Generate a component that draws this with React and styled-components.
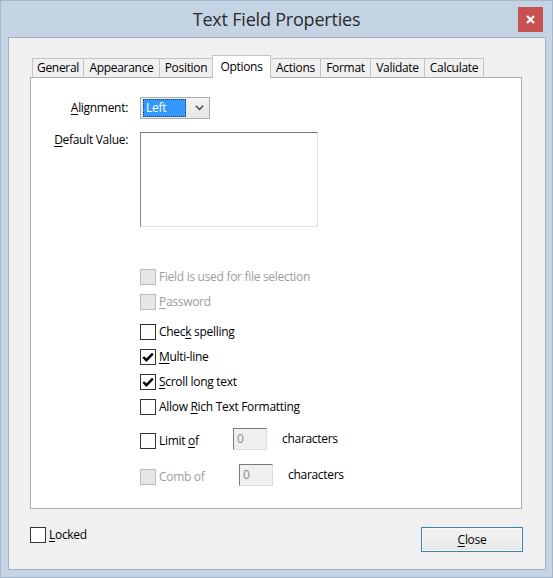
import React from 'react'
import styled, { createGlobalStyle } from 'styled-components'

const GlobalStyle = createGlobalStyle`
html, body {
    margin: 0;
    padding: 0;
}
body {
    background: #c4d4e5;
    font-family: "Open Sans", "Noto Sans", sans-serif;
    font-size: 12px;
    letter-spacing: -0.3px;
    color: #000;
}
`;

const Window = styled.div`
width: 553px;
height: 578px;
box-sizing: border-box;
background: #c4d4e5;
border: 1px solid #a7b8cb;
display: flex;
flex-direction: column;
`;
const TitleBar = styled.div`
height: 36px;
display: grid;
grid-template-columns: 1fr auto 1fr;
align-items: center;
`;
const Title = styled.div`
grid-column: 2;
font-size: 18px;
letter-spacing: -0.2px;
color: #2b2b2b;
line-height: 24px;
`;
const CloseX = styled.div`
grid-column: 3;
justify-self: end;
align-self: start;
margin: 6px 9px 0 0;
width: 25px;
height: 25px;
background: #c75050;
display: flex;
align-items: center;
justify-content: center;
`;
const Client = styled.div`
flex: 1;
margin: 0 6px 7px 7px;
border: 1px solid #a3b0bf;
background: #f0f0f0;
padding: 17px 23px 0 21px;
display: flex;
flex-direction: column;
`;
const TabStrip = styled.div`
display: flex;
align-items: flex-end;
padding-left: 2px;
`;
const Tab = styled.div`
box-sizing: border-box;
width: ${p => p.$w}px;
height: ${p => p.$active ? 23 : 19}px;
margin-left: ${p => p.$first ? 0 : -1}px;
margin-bottom: ${p => p.$active ? -1 : 0}px;
border: 1px solid #c3c3c3;
border-bottom: none;
background: ${p => p.$active ? '#fff' : '#f0f0f0'};
position: relative;
z-index: ${p => p.$active ? 1 : 0};
display: flex;
align-items: center;
justify-content: center;
line-height: 16px;
`;
const Panel = styled.div`
flex: 1;
border: 1px solid #adadad;
background: #fff;
padding-top: 19px;
`;
const FormGrid = styled.div`
display: grid;
grid-template-columns: 97px auto;
column-gap: 12px;
row-gap: 13px;
justify-content: start;
`;
const FieldLabel = styled.div`
text-align: right;
line-height: 16px;
align-self: ${p => p.$top ? 'start' : 'center'};
`;
const Key = styled.span`
text-decoration: underline;
text-underline-offset: 2px;
`;
const Select = styled.div`
box-sizing: border-box;
width: 70px;
height: 22px;
border: 1px solid #acacac;
background: linear-gradient(#f3f3f3, #e6e6e6);
display: flex;
align-items: center;
padding: 0 2px;
`;
const SelectValue = styled.div`
box-sizing: border-box;
width: 43px;
height: 18px;
background: #3399ff;
outline: 1px dotted #1a3c66;
outline-offset: -1px;
color: #fff;
padding-left: 3px;
line-height: 17px;
`;
const Chevron = styled.svg`
margin-left: 9px;
`;
const TextArea = styled.div`
box-sizing: border-box;
width: 178px;
height: 95px;
background: #fff;
border-top: 1px solid #7a7a7a;
border-left: 1px solid #8a8a8a;
border-right: 1px solid #e3e3e3;
border-bottom: 1px solid #e3e3e3;
`;
const CheckList = styled.div`
display: flex;
flex-direction: column;
gap: 9px;
margin: 42px 0 0 109px;
`;
const Row = styled.div`
display: flex;
align-items: center;
margin-top: ${p => p.$push || 0}px;
`;
const CountRow = styled.div`
display: flex;
align-items: flex-start;
margin-top: ${p => p.$push || 0}px;
`;
const Box = styled.span`
box-sizing: border-box;
width: 16px;
height: 16px;
flex: none;
margin-top: ${p => p.$drop || 0}px;
border: 1px solid ${p => p.$disabled ? '#bcbcbc' : '#333'};
background: ${p => p.$disabled ? '#e6e6e6' : '#fff'};
display: flex;
align-items: center;
justify-content: center;
`;
const Text = styled.span`
margin-left: 3px;
margin-top: ${p => p.$drop || 0}px;
line-height: 16px;
color: ${p => p.$disabled ? '#9d9d9d' : '#000'};
width: ${p => p.$w ? p.$w + 'px' : 'auto'};
`;
const NumField = styled.div`
box-sizing: border-box;
width: 34px;
height: 22px;
background: #f0f0f0;
border-top: 1px solid #7a7a7a;
border-left: 1px solid #7a7a7a;
border-right: 1px solid #dcdcdc;
border-bottom: 1px solid #dcdcdc;
color: #8a8a8a;
padding-left: 3px;
line-height: 19px;
`;
const Unit = styled.span`
margin-left: 15px;
line-height: 22px;
`;
const Footer = styled.div`
display: flex;
justify-content: space-between;
align-items: flex-start;
padding: 18px 0 17px;
`;
const CheckRow = styled.div`
display: flex;
align-items: center;
`;
const Button = styled.div`
box-sizing: border-box;
width: 102px;
height: 25px;
margin-right: -1px;
border: 1px solid #3c7fb1;
background: linear-gradient(#f2f2f2, #e8e8e8);
box-shadow: inset 0 0 0 1px #f8fbfe;
display: flex;
align-items: center;
justify-content: center;
`;

const tabs = [
    ['General', 52],
    ['Appearance', 77],
    ['Position', 54],
    ['Options', 59],
    ['Actions', 51],
    ['Format', 51],
    ['Validate', 55],
    ['Calculate', 60],
];

function Check({ checked, disabled, drop }) {
    return (
        <Box $disabled={disabled} $drop={drop}>
            {checked && (
                <svg width="12" height="12" viewBox="0 0 12 12">
                    <path d="M1.3 6 L4.4 9.2 L10.8 2.6" fill="none" stroke="#000" strokeWidth="2.4" />
                </svg>
            )}
        </Box>
    )
}

function Option({ children, checked, disabled, push }) {
    return (
        <Row $push={push}>
            <Check checked={checked} disabled={disabled} />
            <Text $disabled={disabled}>{children}</Text>
        </Row>
    )
}

export default function App() {
    return (
        <Window>
            <GlobalStyle />
            <TitleBar>
                <Title>Text Field Properties</Title>
                <CloseX>
                    <svg width="9" height="9" viewBox="0 0 9 9">
                        <path d="M1 1 L8 8 M8 1 L1 8" stroke="#fff" strokeWidth="2.2" />
                    </svg>
                </CloseX>
            </TitleBar>
            <Client>
                <TabStrip>
                    {tabs.map(([name, w], i) => (
                        <Tab key={name} $w={w} $first={i === 0} $active={name === 'Options'}>{name}</Tab>
                    ))}
                </TabStrip>
                <Panel>
                    <FormGrid>
                        <FieldLabel><Key>A</Key>lignment:</FieldLabel>
                        <Select>
                            <SelectValue>Left</SelectValue>
                            <Chevron width="9" height="6" viewBox="0 0 9 6">
                                <polyline points="0.8,0.8 4.5,4.6 8.2,0.8" fill="none" stroke="#444" strokeWidth="1.4" />
                            </Chevron>
                        </Select>
                        <FieldLabel $top><Key>D</Key>efault Value:</FieldLabel>
                        <TextArea />
                    </FormGrid>
                    <CheckList>
                        <Option disabled>Field is used for file selection</Option>
                        <Option disabled><Key>P</Key>assword</Option>
                        <Option push={5}>Chec<Key>k</Key> spelling</Option>
                        <Option checked><Key>M</Key>ulti-line</Option>
                        <Option checked><Key>S</Key>croll long text</Option>
                        <Option>Allow <Key>R</Key>ich Text Formatting</Option>
                        <CountRow $push={4}>
                            <Check drop={5} />
                            <Text $w={74} $drop={5}>Limit <Key>o</Key>f</Text>
                            <NumField>0</NumField>
                            <Unit>characters</Unit>
                        </CountRow>
                        <CountRow $push={5}>
                            <Check disabled drop={5} />
                            <Text $disabled $w={80} $drop={5}>Comb of</Text>
                            <NumField>0</NumField>
                            <Unit>characters</Unit>
                        </CountRow>
                    </CheckList>
                </Panel>
                <Footer>
                    <CheckRow>
                        <Check />
                        <Text><Key>L</Key>ocked</Text>
                    </CheckRow>
                    <Button><span><Key>C</Key>lose</span></Button>
                </Footer>
            </Client>
        </Window>
    )
}
